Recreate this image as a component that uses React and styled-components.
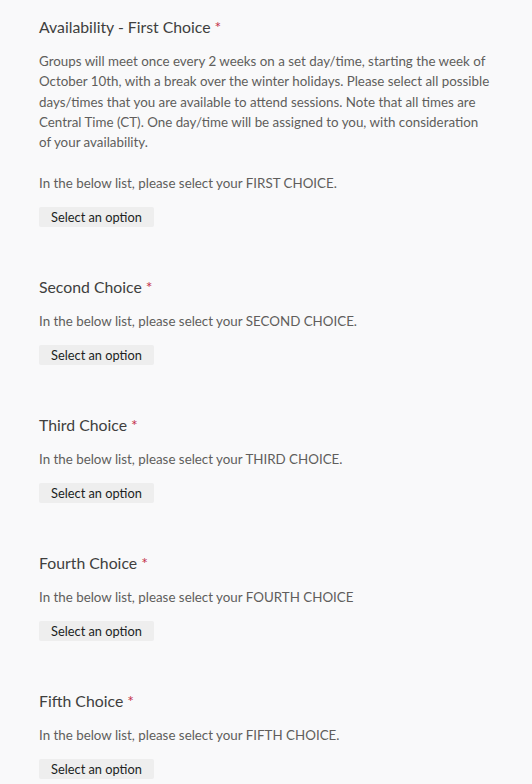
import React from 'react';
import styled, { createGlobalStyle } from 'styled-components';

const GlobalStyle = createGlobalStyle`
    html, body {
        margin: 0;
        padding: 0;
        background-color: #f9f9fa;
    }
    body {
        font-family: 'Segoe UI', Lato, 'Open Sans', sans-serif;
    }
`;

const Page = styled.div`
    display: flex;
    flex-direction: column;
    padding: 15px 0 0 39px;
    width: 532px;
    height: 784px;
    box-sizing: border-box;
    overflow: hidden;
    background-color: #f9f9fa;
`;

const Question = styled.div`
    display: flex;
    flex-direction: column;
    align-items: flex-start;
    margin-bottom: 47.7px;
`;

const Title = styled.div`
    font-size: 15.8px;
    line-height: 24px;
    color: #403f3e;
    margin-bottom: 12px;
`;

const Required = styled.span`
    color: #c4314b;
    margin-left: 4px;
`;

const Description = styled.div`
    width: 452px;
    font-size: 13.35px;
    line-height: 20.33px;
    color: #605e5c;
    white-space: pre-line;
`;

const SelectButton = styled.button`
    margin-top: 14px;
    height: 20px;
    width: 115px;
    padding: 0;
    border: none;
    border-radius: 2px;
    background-color: #eeeeee;
    color: #201f1e;
    font-family: inherit;
    font-size: 12.8px;
    line-height: 20px;
    text-align: center;
`;

const intro = 'Groups will meet once every 2 weeks on a set day/time, starting the week of October 10th, with a break over the winter holidays. Please select all possible days/times that you are available to attend sessions. Note that all times are Central Time (CT). One day/time will be assigned to you, with consideration of your availability.';

const questions = [
    { title: 'Availability - First Choice', text: `${intro}\n\nIn the below list, please select your FIRST CHOICE.` },
    { title: 'Second Choice', text: 'In the below list, please select your SECOND CHOICE.' },
    { title: 'Third Choice', text: 'In the below list, please select your THIRD CHOICE.' },
    { title: 'Fourth Choice', text: 'In the below list, please select your FOURTH CHOICE' },
    { title: 'Fifth Choice', text: 'In the below list, please select your FIFTH CHOICE.' },
];

const App = () => (
    <Page>
        <GlobalStyle />
        {questions.map((q) => (
            <Question key={q.title}>
                <Title>
                    {q.title}
                    <Required>*</Required>
                </Title>
                <Description>{q.text}</Description>
                <SelectButton>Select an option</SelectButton>
            </Question>
        ))}
    </Page>
);

export default App;
